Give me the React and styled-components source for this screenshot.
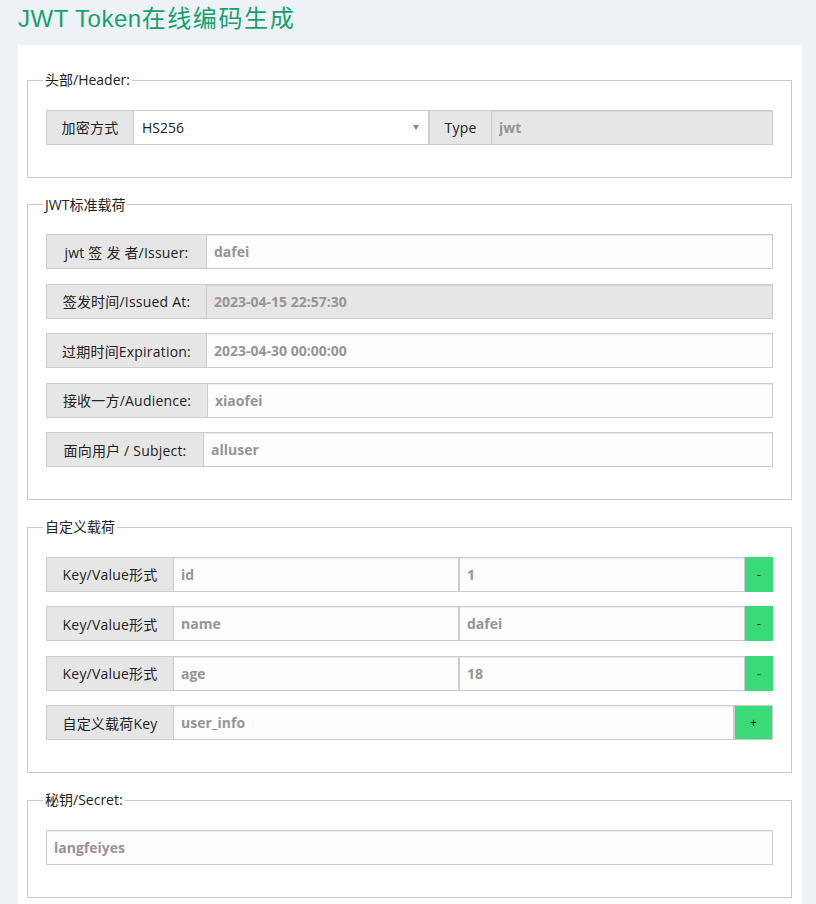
import React from 'react';
import styled, { createGlobalStyle } from 'styled-components';

const Global = createGlobalStyle`
  html, body { margin: 0; padding: 0; background: #eef2f7; }
  body {
    font-family: "Open Sans", "Noto Sans CJK SC", sans-serif;
    font-size: 14px;
    color: #333;
  }
  * { box-sizing: border-box; }
`;

const Page = styled.div`
  padding: 6px 14px 0 18px;
`;

const Title = styled.h1`
  margin: 0 0 13px;
  height: 26px;
  line-height: 26px;
  font-family: "Liberation Sans", "Noto Sans CJK SC", sans-serif;
  font-size: 24px;
  font-weight: normal;
  letter-spacing: 0.5px;
  color: #17a16f;
  white-space: nowrap;
  overflow: visible;
`;

const TitleCjk = styled.span`
  letter-spacing: 1.6px;
`;

const Card = styled.div`
  background: #fff;
  padding: 26px 10px 20px 9px;
`;

const Fieldset = styled.fieldset`
  margin: 0 0 18px;
  padding: 20.5px 18px 32px;
  border: 1px solid #c9c9c9;
  min-width: 0;
`;

const Legend = styled.legend`
  display: block;
  height: 18px;
  font-size: 14px;
  line-height: 18px;
  padding: 0 2px;
  margin-left: -3px;
  color: #222;
  overflow: visible;
`;

const Rows = styled.div`
  display: flex;
  flex-direction: column;
  gap: 14.5px;
`;

const Group = styled.div`
  display: flex;
  height: 35px;
`;

const Addon = styled.span`
  display: flex;
  align-items: center;
  justify-content: center;
  flex: none;
  padding: 0 10px;
  width: ${(p) => (p.$w ? `${p.$w}px` : 'auto')};
  background: #e6e6e6;
  border: 1px solid #ccc;
  border-right: 0;
  font-size: 14px;
  letter-spacing: 0.2px;
  color: #222;
  white-space: nowrap;
`;

const Field = styled.input`
  flex: 1 1 0;
  min-width: 0;
  height: 100%;
  padding: 0 7px;
  border: 1px solid #ccc;
  background: ${(p) => (p.$disabled ? '#e6e6e6' : '#fdfdfd')};
  box-shadow: inset 0 1px 1px rgba(0, 0, 0, 0.075);
  font-family: inherit;
  font-size: 14px;
  font-weight: 700;
  color: #9a9393;
  outline: none;
`;

const SelectBox = styled.div`
  display: flex;
  align-items: center;
  justify-content: space-between;
  flex: none;
  width: 296px;
  height: 100%;
  padding: 0 9px 0 8px;
  border: 1px solid #ccc;
  background: #fff;
  color: #222;
  font-size: 14px;
`;

const Caret = styled.span`
  width: 0;
  height: 0;
  border-left: 3.5px solid transparent;
  border-right: 3.5px solid transparent;
  border-top: 5px solid #888;
`;

const ActionButton = styled.button`
  flex: none;
  width: ${(p) => (p.$plus ? '39px' : '28px')};
  height: 100%;
  padding: 0;
  border: ${(p) => (p.$plus ? '1px solid #ccc' : '0')};
  background: #3ada78;
  color: #111;
  font-family: inherit;
  font-size: 12px;
  cursor: pointer;
`;

const standard = [
  { label: 'jwt 签 发 者/Issuer:', value: 'dafei', w: 160 },
  { label: '签发时间/Issued At:', value: '2023-04-15 22:57:30', disabled: true, w: 160 },
  { label: '过期时间Expiration:', value: '2023-04-30 00:00:00', w: 160 },
  { label: '接收一方/Audience:', value: 'xiaofei', w: 161 },
  { label: '面向用户 / Subject:', value: 'alluser', w: 157 },
];

const custom = [
  { k: 'id', v: '1' },
  { k: 'name', v: 'dafei' },
  { k: 'age', v: '18' },
];

export default function App() {
  return (
    <Page>
      <Global />
      <Title>
        JWT Token<TitleCjk>在线编码生成</TitleCjk>
      </Title>
      <Card>
        <Fieldset>
          <Legend>头部/Header:</Legend>
          <Group>
            <Addon $w={87}>加密方式</Addon>
            <SelectBox role="listbox">
              <span>HS256</span>
              <Caret />
            </SelectBox>
            <Addon $w={62}>Type</Addon>
            <Field $disabled readOnly defaultValue="jwt" />
          </Group>
        </Fieldset>

        <Fieldset>
          <Legend>JWT标准载荷</Legend>
          <Rows>
            {standard.map((r) => (
              <Group key={r.label}>
                <Addon $w={r.w}>{r.label}</Addon>
                <Field $disabled={r.disabled} readOnly={r.disabled} defaultValue={r.value} />
              </Group>
            ))}
          </Rows>
        </Fieldset>

        <Fieldset>
          <Legend>自定义载荷</Legend>
          <Rows>
            {custom.map((r) => (
              <Group key={r.k}>
                <Addon $w={127}>Key/Value形式</Addon>
                <Field defaultValue={r.k} />
                <Field defaultValue={r.v} />
                <ActionButton>-</ActionButton>
              </Group>
            ))}
            <Group>
              <Addon $w={127}>自定义载荷Key</Addon>
              <Field defaultValue="user_info" />
              <ActionButton $plus>+</ActionButton>
            </Group>
          </Rows>
        </Fieldset>

        <Fieldset>
          <Legend>秘钥/Secret:</Legend>
          <Group>
            <Field defaultValue="langfeiyes" />
          </Group>
        </Fieldset>
      </Card>
    </Page>
  );
}
